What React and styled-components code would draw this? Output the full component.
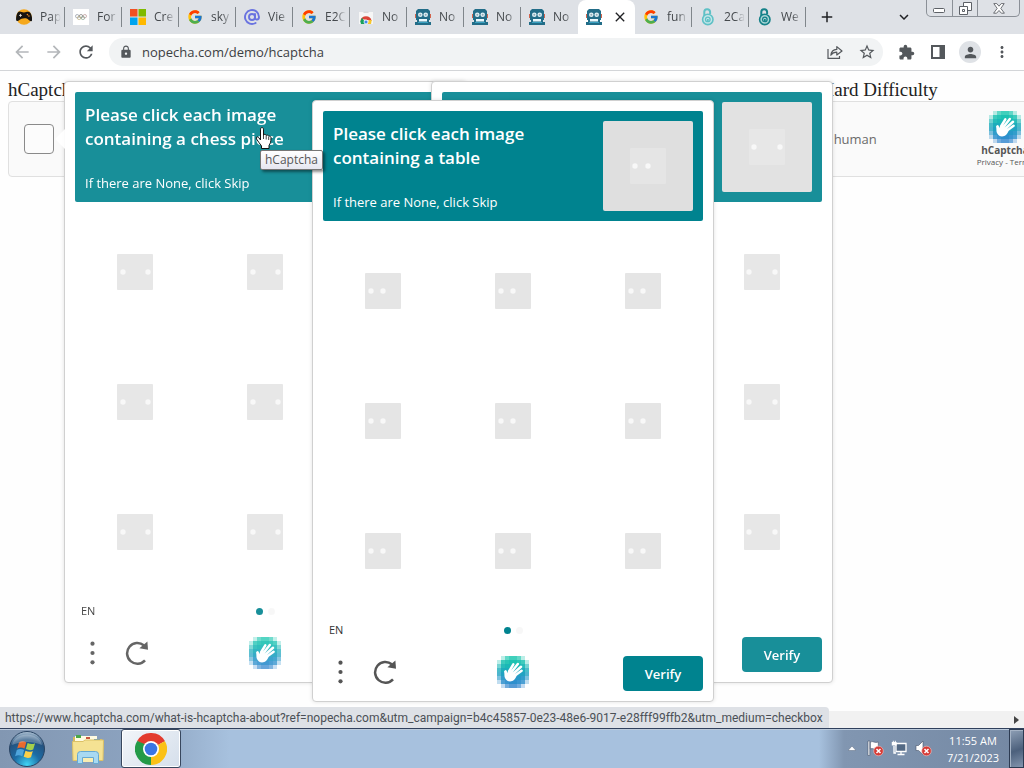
import React from 'react'
import styled, { createGlobalStyle } from 'styled-components'
import { FcGoogle } from 'react-icons/fc'
import {
  MdArrowBack,
  MdArrowForward,
  MdRefresh,
  MdLock,
  MdStarBorder,
  MdExtension,
  MdPerson,
  MdMoreVert,
  MdAdd,
  MdClose,
  MdKeyboardArrowDown,
} from 'react-icons/md'

const GlobalStyle = createGlobalStyle`
  * {
    box-sizing: border-box;
  }
  body {
    margin: 0;
    background: #fff;
    font-family: "Open Sans", "Noto Sans", sans-serif;
  }
  button {
    font: inherit;
    border: 0;
    padding: 0;
    background: none;
    color: inherit;
  }
  svg {
    display: block;
    flex: none;
  }
`

const teal = '#00838f'

/* ---------- layout ---------- */

const Desktop = styled.div`
  display: flex;
  flex-direction: column;
  height: 100vh;
  overflow: hidden;
`

/* ---------- tab strip ---------- */

const TabStrip = styled.header`
  display: flex;
  align-items: center;
  height: 34px;
  padding-left: 8px;
  background: #dee1e6;
`

const Tab = styled.button`
  flex: 0 1 57px;
  display: flex;
  align-items: center;
  gap: ${(p) => (p.$active ? '10px' : '8px')};
  min-width: 0;
  height: ${(p) => (p.$active ? '34px' : '20px')};
  padding: 0 2px 0 8px;
  border-radius: ${(p) => (p.$active ? '8px 8px 0 0' : '0')};
  border-right: ${(p) => (p.$line ? '1px solid #80868b' : '1px solid transparent')};
  background: ${(p) => (p.$active ? '#fff' : 'none')};
  color: #45494d;
`

const TabTitle = styled.span`
  flex: 1;
  overflow: hidden;
  white-space: nowrap;
  text-align: left;
  font-size: 12px;
  line-height: 18px;
  mask-image: linear-gradient(to right, #000 50%, transparent 95%);
`

const StripButton = styled.button`
  display: grid;
  place-items: center;
  width: 28px;
  height: 28px;
  margin-left: 7px;
  color: #202124;
`

const Spacer = styled.div`
  flex: 1;
`

const WindowButtons = styled.div`
  display: flex;
  align-self: flex-start;
  height: 17px;
  margin: 0 4px 0 8px;
  border: 1px solid #8b9097;
  border-top: 0;
  border-radius: 0 0 5px 5px;
`

const WindowButton = styled.button`
  display: grid;
  place-items: center;
  width: ${(p) => (p.$wide ? '42px' : '25px')};
  & + & {
    border-left: 1px solid #8b9097;
  }
`

/* ---------- toolbar ---------- */

const Toolbar = styled.nav`
  display: flex;
  align-items: center;
  height: 37px;
  padding: 0 6px;
  border-bottom: 1px solid #d3d5d8;
  background: #fff;
`

const ToolButton = styled.button`
  display: grid;
  place-items: center;
  width: 32px;
  height: 28px;
  color: ${(p) => (p.$muted ? '#b4b7ba' : '#54585c')};
`

const Omnibox = styled.div`
  flex: 1;
  display: flex;
  align-items: center;
  height: 28px;
  margin: 0 7px;
  padding-left: 10px;
  border-radius: 14px;
  background: #f1f3f4;
  color: #54585c;
`

const Address = styled.input`
  flex: 1;
  min-width: 0;
  margin-left: 9px;
  padding: 0;
  border: 0;
  outline: 0;
  background: none;
  font-family: "Open Sans", sans-serif;
  font-size: 13px;
  line-height: 20px;
  color: #3c4043;
`

const Avatar = styled.span`
  display: grid;
  place-items: center;
  width: 22px;
  height: 22px;
  border-radius: 50%;
  background: #dfe2e6;
`

/* ---------- page ---------- */

const Page = styled.main`
  position: relative;
  flex: 1;
  min-height: 0;
  overflow: hidden;
  padding: 8px;
  background: #fefefe;
`

const Demos = styled.div`
  display: flex;
  gap: 433px;
`

const Demo = styled.section`
  flex: 0 0 303px;
`

const DemoTitle = styled.h3`
  margin: 0;
  font-family: "Liberation Serif", serif;
  font-size: 19px;
  font-weight: 400;
  line-height: 22px;
  white-space: nowrap;
  color: #222;
`

const Widget = styled.div`
  display: flex;
  align-items: center;
  height: 76px;
  padding: 0 7px 0 15px;
  border: 1px solid #e0e0e0;
  border-radius: 4px;
  background: #fafafa;
`

const Check = styled.input`
  appearance: none;
  width: 30px;
  height: 30px;
  margin: 0;
  border: 1px solid #8a8a8a;
  border-radius: 4px;
  background: #fcfcfc;
`

const CheckLabel = styled.label`
  flex: 1;
  margin-left: 14px;
  font-size: 13px;
  color: #6a6a6a;
`

const Brand = styled.div`
  display: flex;
  flex-direction: column;
  align-items: center;
  width: 68px;
  color: #555;
`

const BrandName = styled.strong`
  font-size: 10px;
  font-weight: 700;
  line-height: 14px;
`

const BrandLinks = styled.small`
  font-size: 8px;
  line-height: 10px;
  white-space: nowrap;
  a {
    color: inherit;
    text-decoration: none;
  }
`

/* ---------- challenge popup ---------- */

const Card = styled.section`
  position: absolute;
  top: ${(p) => p.$top}px;
  left: ${(p) => p.$left}px;
  width: 402px;
  padding: 10px;
  border: 1px solid #d0d0d0;
  border-radius: 4px;
  background: #fff;
  box-shadow: 0 0 4px rgba(0, 0, 0, 0.12);
  > * {
    opacity: ${(p) => (p.$faded ? 0.9 : 1)};
  }
`

const Pointer = styled.span`
  position: absolute;
  top: 47px;
  right: 100%;
  border: 10px solid transparent;
  border-left-width: 0;
  border-right-color: #fff;
`

const Prompt = styled.header`
  display: flex;
  justify-content: space-between;
  height: 110px;
  padding: 10px;
  border-radius: 2px;
  background: ${teal};
  color: #fff;
`

const PromptText = styled.div`
  display: flex;
  flex-direction: column;
  justify-content: space-between;
  width: 220px;
`

const PromptTitle = styled.h2`
  margin: 1px 0 0;
  font-size: 17px;
  font-weight: 600;
  line-height: 24px;
`

const PromptHint = styled.p`
  margin: 0;
  font-size: 13px;
  line-height: 18px;
`

const Example = styled.div`
  display: grid;
  place-items: center;
  width: 90px;
  height: 90px;
  border-radius: 2px;
  background: #dfdfdf;
`

const Tiles = styled.div`
  display: grid;
  grid-template-columns: repeat(3, 1fr);
  grid-auto-rows: 120px;
  gap: 10px;
  margin-top: 10px;
`

const Tile = styled.button`
  display: grid;
  place-items: center;
`

const Progress = styled.div`
  display: grid;
  grid-template-columns: 1fr auto 1fr;
  align-items: center;
  height: 20px;
  margin-top: 9px;
  padding: 0 6px;
`

const Language = styled.span`
  font-size: 11px;
  line-height: 20px;
  color: #333;
`

const Dots = styled.span`
  display: flex;
  gap: 5px;
`

const Dot = styled.i`
  width: 7px;
  height: 7px;
  border-radius: 50%;
  background: ${(p) => (p.$on ? teal : '#f7f7f7')};
`

const Actions = styled.footer`
  display: grid;
  grid-template-columns: 1fr auto 1fr;
  align-items: start;
  height: 35px;
  margin-top: 16px;
`

const ActionGroup = styled.div`
  display: flex;
  align-items: center;
  gap: 30px;
  height: 32px;
  padding-left: 15px;
  color: #555;
`

const VerifyButton = styled.button`
  justify-self: end;
  width: 80px;
  height: 35px;
  border-radius: 4px;
  background: ${teal};
  color: #fff;
  font-size: 13px;
  font-weight: 600;
`

/* ---------- things floating over the page ---------- */

const Tooltip = styled.div`
  position: absolute;
  top: 79px;
  left: 260px;
  padding: 0 4px;
  border: 1px solid #767676;
  border-radius: 2px;
  background: linear-gradient(#fff, #e6e6f0);
  box-shadow: 2px 2px 3px rgba(0, 0, 0, 0.45);
  font-size: 12px;
  line-height: 18px;
  color: #575757;
`

const Cursor = styled.svg`
  position: absolute;
  top: 56px;
  left: 255px;
`

const ScrollBar = styled.div`
  position: absolute;
  left: 0;
  right: 0;
  bottom: 0;
  display: flex;
  align-items: center;
  justify-content: flex-end;
  height: 17px;
  padding-right: 5px;
  background: #f1f1f1;
`

const StatusBubble = styled.div`
  position: absolute;
  left: 0;
  bottom: 0;
  height: 21px;
  padding: 0 6px 0 5px;
  border-top-right-radius: 4px;
  background: #dee1e6;
  font-family: Roboto, "Open Sans", sans-serif;
  font-size: 12px;
  line-height: 22px;
  white-space: nowrap;
  color: #4b5056;
`

/* ---------- taskbar ---------- */

const Taskbar = styled.footer`
  display: flex;
  align-items: center;
  height: 40px;
  border-top: 1px solid #30405c;
  background: linear-gradient(
    to right,
    #8297b2 0,
    #8da4c1 150px,
    #a7c1de 230px,
    #a7c1de calc(100% - 205px),
    #8196b1 calc(100% - 180px),
    #7488a3 100%
  );
  box-shadow: inset 0 1px 0 #bccbdc;
`

const TaskButton = styled.button`
  display: grid;
  place-items: center;
  width: ${(p) => p.$width}px;
  height: 39px;
  border: ${(p) => (p.$active ? '1px solid #38475e' : '0')};
  border-radius: 3px;
  background: ${(p) => (p.$active ? 'linear-gradient(135deg, #f2f5f9, #d5dfeb)' : 'none')};
  box-shadow: ${(p) => (p.$active ? 'inset 0 0 0 1px #fff' : 'none')};
`

const Tray = styled.div`
  display: flex;
  align-items: center;
  gap: 7px;
  padding-right: 2px;
`

const TrayArrow = styled.button`
  margin-right: 4px;
`

const Clock = styled.time`
  width: 68px;
  text-align: center;
  font-size: 11px;
  line-height: 17px;
  color: #fff;
`

const ShowDesktop = styled.button`
  width: 15px;
  height: 39px;
  border: 1px solid #2c3b52;
  background: linear-gradient(160deg, #8fa0b6, #4c607c 55%, #8294ad);
  box-shadow: inset 1px 1px 0 #a5b3c5;
`

/* ---------- drawings ---------- */

const logoRows = [
  [0, 0.3, 0.7, 0.85, 0.85, 0.7, 0.3, 0],
  [0.3, 0.85, 0.95, 1, 1, 0.95, 0.85, 0.3],
  [0.6, 0.95, 1, 1, 1, 1, 0.95, 0.6],
  [0.8, 1, 1, 1, 1, 1, 1, 0.8],
  [0.8, 1, 1, 1, 1, 1, 1, 0.8],
  [0.6, 0.95, 1, 1, 1, 1, 0.95, 0.6],
  [0.3, 0.85, 0.95, 1, 1, 0.95, 0.85, 0.3],
  [0, 0.3, 0.7, 0.85, 0.85, 0.7, 0.3, 0],
]
const logoColors = ['#1fc8b0', '#1cc2b2', '#1bb8b6', '#1dadbc', '#21a2c2', '#2798c8', '#2e8fcd', '#3889cf']

const HandLogo = ({ size = 32 }) => (
  <svg width={size} height={size} viewBox="0 0 32 32" shapeRendering="crispEdges">
    {logoRows.map((row, y) =>
      row.map((o, x) => (
        <rect key={`${x}-${y}`} x={x * 4} y={y * 4} width="4" height="4" fill={logoColors[y]} opacity={o} />
      ))
    )}
    <g shapeRendering="auto" stroke="#fff" strokeLinecap="round" strokeWidth="2.5" fill="none">
      <path d="M12 15.5L16.3 8.4M14.5 16L20.8 8M16.5 17.5L24 10.8M18 19.5L24.6 14.8M8.5 15.4L9.6 19" />
    </g>
    <path
      shapeRendering="auto"
      fill="#fff"
      d="M7.4 15.2c1.5-.6 2.8.6 3.2 1.6l1.4-2.2 7.6 4.8c-.8 3.4-3.3 5.9-6.6 6-3.3 0-5.6-2.8-5.6-6.4z"
    />
  </svg>
)

const Robot = () => (
  <svg width="16" height="16" viewBox="0 0 16 16">
    <path fill="#d2644d" d="M0 5h2v4H0zM14 5h2v4h-2z" />
    <path fill="#226d88" d="M3 0h10l2 2v9H1V2zM2 10h12v3H2zM0 13h16v3H0z" />
    <circle cx="5.3" cy="5.8" r="2.3" fill="#dff0f6" />
    <circle cx="10.7" cy="5.8" r="2.3" fill="#dff0f6" />
    <circle cx="5.3" cy="5.8" r="1" fill="#8fa9b4" />
    <circle cx="10.7" cy="5.8" r="1" fill="#8fa9b4" />
    <path fill="#e9f8fd" d="M4 10h8v2.5H4z" />
    <path fill="#39a0c0" d="M3 13h10v1H3z" />
  </svg>
)

const Gamepad = () => (
  <svg width="16" height="16" viewBox="0 0 16 16">
    <circle cx="8" cy="8" r="7.8" fill="#f5a81c" />
    <path
      fill="#161412"
      d="M2 3.2c1.8-1.5 3.7.3 6 .2 2.4-.1 4.2-1.5 6 .1 1.8 1.8 2.5 6.9 1.9 8.2-1.6 1.7-3.6-1.5-5.2-2.1-1.6-.5-3.7-.3-5.2.2-1.6.7-3.6 3.4-5.2 1.8C-.3 10.400.3 5 2 3.200z"
    />
    <path stroke="#f2ece2" strokeWidth=".8" d="M3 6.4h3M4.500 4.900v3" />
    <circle cx="11.4" cy="5.6" r=".8" fill="#f08a24" />
    <circle cx="12.9" cy="7" r=".8" fill="#f08a24" />
  </svg>
)

const Rings = () => (
  <svg width="16" height="16" viewBox="0 0 16 16">
    <path fill="#fff" d="M0 0h16v16H0z" />
    <g fill="none" strokeWidth=".7">
      <circle cx="4.2" cy="7.2" r="1.7" stroke="#8b93a0" />
      <circle cx="8" cy="7.2" r="1.7" stroke="#777" />
      <circle cx="11.8" cy="7.2" r="1.7" stroke="#b58e8e" />
      <circle cx="6.1" cy="8.9" r="1.7" stroke="#bcae80" />
      <circle cx="9.9" cy="8.9" r="1.7" stroke="#86a28e" />
    </g>
  </svg>
)

const Microsoft = () => (
  <svg width="16" height="16" viewBox="0 0 16 16">
    <path fill="#f25022" d="M0 0h7.5v7.5H0z" />
    <path fill="#7fba00" d="M8.5 0H16v7.5H8.5z" />
    <path fill="#00a4ef" d="M0 8.5h7.5V16H0z" />
    <path fill="#ffb900" d="M8.5 8.5H16V16H8.5z" />
  </svg>
)

const AtSign = () => (
  <svg width="16" height="16" viewBox="0 0 16 16" fill="none" stroke="#6a73e0" strokeWidth="1.9">
    <circle cx="8" cy="8" r="3" />
    <path strokeLinecap="round" d="M11 5v3.7c0 2.6 4 2.4 4-.8A7 7 0 1 0 11.6 14" />
  </svg>
)

const WebStore = () => (
  <svg width="16" height="16" viewBox="0 0 16 16">
    <path fill="#f6f6f6" d="M1 3h14v12H1z" />
    <path fill="#d9d9d9" d="M5.5 2.5h5V4h-5z" />
    <path fill="#dc4437" d="M2.4 12a5.7 5.7 0 0 1 11.2 0l-3-.8-5.4-1z" />
    <path fill="#189f5b" d="M2.3 12.4 4 8.7l3 4.3v2H3z" />
    <path fill="#f7c72b" d="M9 15l2-4h2.7l-.7 4z" />
    <circle cx="8" cy="13" r="2" fill="#4588ee" stroke="#fff" strokeWidth=".8" />
  </svg>
)

const Padlock = ({ color, soft }) => (
  <svg width="16" height="18" viewBox="0 0 16 18" fill="none">
    <path stroke={color} strokeWidth="2" d="M4.3 8V4.4a2.9 2.9 0 0 1 5.8-.5v2" />
    <circle cx="7.8" cy="11.4" r="5.2" fill={soft} stroke={color} strokeWidth="1.6" />
    <circle cx="7.8" cy="11.4" r="2.3" stroke={color} strokeWidth="1.3" />
    <path fill={color} d="M7 11h1.7v3H7z" />
  </svg>
)

const ShareIcon = () => (
  <svg width="16" height="16" viewBox="0 0 16 16" fill="none" stroke="currentColor" strokeWidth="1.2">
    <path d="M1 5v9.4h11.5V12" />
    <path strokeLinejoin="round" d="M3.8 11.2c.4-3.5 2.6-5.5 6-5.8V2.6L15 7l-5.2 4V8.2c-2.8 0-4.6 1-6 3z" />
  </svg>
)

const SidePanelIcon = () => (
  <svg width="14" height="14" viewBox="0 0 14 14">
    <path fill="none" stroke="currentColor" strokeWidth="2" d="M1 1h12v12H1z" />
    <path fill="currentColor" d="M8.5 1H13v12H8.5z" />
  </svg>
)

const MinimizeIcon = () => (
  <svg width="13" height="12" viewBox="0 0 13 12">
    <rect x=".5" y="6.5" width="11" height="4" rx="1" fill="#fff" stroke="#5d6167" />
  </svg>
)

const RestoreIcon = () => (
  <svg width="13" height="13" viewBox="0 0 13 13" fill="#fff" stroke="#5d6167">
    <path d="M4.5.5h8v8h-8z" />
    <path d="M.5 4.5h8v8h-8z" />
    <path d="M3.5 7.5h2v2h-2z" />
  </svg>
)

const CloseIcon = () => (
  <svg width="12" height="11" viewBox="0 0 12 11">
    <path
      fill="#fff"
      stroke="#5d6167"
      strokeWidth=".9"
      d="M.8.6h3L6 3.2 8.2.6h3L7.8 5.4l3.6 4.8h-3L6 7.5 3.6 10.2h-3l3.6-4.8z"
    />
  </svg>
)

const Placeholder = ({ eyes }) => (
  <svg width="36" height="36" viewBox="0 0 36 36">
    <rect width="36" height="36" rx="1" fill="#e5e5e5" />
    {eyes.map((x) => (
      <circle key={x} cx={x} cy="18" r="2.7" fill="#f8f8f8" />
    ))}
  </svg>
)

const DotsIcon = () => (
  <svg width="5" height="24" viewBox="0 0 5 24" fill="currentColor">
    <circle cx="2.5" cy="2.7" r="2.1" />
    <circle cx="2.5" cy="12" r="2.1" />
    <circle cx="2.5" cy="21.3" r="2.1" />
  </svg>
)

const ReloadIcon = () => (
  <svg width="24" height="24" viewBox="0 0 24 24">
    <path fill="none" stroke="currentColor" strokeWidth="2.5" d="M20 19.3A10.3 10.3 0 1 1 18.8 4.3" />
    <path fill="currentColor" d="M22.4.4l.6 8.4-8.6-1.6z" />
  </svg>
)

const StartOrb = () => (
  <svg width="38" height="38" viewBox="0 0 38 38">
    <defs>
      <radialGradient id="orb" cx=".5" cy=".95" r=".95">
        <stop offset="0" stopColor="#3fd5f5" />
        <stop offset=".4" stopColor="#1c6ca5" />
        <stop offset=".75" stopColor="#24527f" />
        <stop offset="1" stopColor="#b4c7d8" />
      </radialGradient>
    </defs>
    <circle cx="19" cy="19" r="17.5" fill="url(#orb)" stroke="#294463" />
    <path fill="#ea6a2d" d="M11 12.5c2.5-1.8 4.7-1.5 7.3-.2l-1.8 6.2c-2.5-1.3-4.9-1.5-7.3 0z" />
    <path fill="#a5cf4c" d="M19.6 13c2.5 1.3 5 1.5 7.5.2l-1.9 6.3c-2.5 1.3-4.8.8-7.3-.4z" />
    <path fill="#4fa5dc" d="M8.8 20c2.5-1.5 4.8-1.3 7.3 0l-1.8 6.2c-2.5-1.3-4.8-1.4-7.2.1z" />
    <path fill="#fbd04a" d="M17.5 20.7c2.5 1.3 4.9 1.5 7.3.2L23 27.2c-2.5 1.3-4.8.8-7.3-.4z" />
    <path fill="#fff" opacity=".25" d="M4 15C7 1 31 1 34 15 25 11 13 11 4 15z" />
  </svg>
)

const FolderIcon = () => (
  <svg width="34" height="30" viewBox="0 0 34 30">
    <path fill="#d9b95c" d="M2 3h10l2 2h17v20H2z" />
    <path fill="#fffbe2" d="M4 2h22v6H4z" />
    <path fill="#49a847" d="M5 1h5v3H5z" />
    <path fill="#c8553e" d="M15 3h4v2h-4z" />
    <path fill="#4b8fc9" d="M23 5h6v2h-6z" />
    <path fill="#f5e293" stroke="#dcc166" d="M1.5 7.5H12l2-1.5h18.5L32 26.5H2z" />
    <path fill="#a8d9f2" stroke="#66a9d2" d="M6.5 29.5v-9a3 3 0 0 1 3-3h15a3 3 0 0 1 3 3v9h-5v-6h-11v6z" />
    <path fill="#f9edb2" d="M12 24h10v4H12z" />
  </svg>
)

const ChromeIcon = () => (
  <svg width="32" height="32" viewBox="0 0 32 32">
    <path fill="#e33b2e" d="M16 16L2.14 8A16 16 0 0 1 29.86 8z" />
    <path fill="#fbc116" d="M16 16L29.86 8A16 16 0 0 1 16 32z" />
    <path fill="#239a48" d="M16 16v16A16 16 0 0 1 2.14 8z" />
    <path fill="#e33b2e" d="M16 8h13.86L20 12z" />
    <path fill="#239a48" d="M9.07 20L2.14 8 12 12z" />
    <path fill="#fbc116" d="M22.93 20L16 32v-9z" />
    <circle cx="16" cy="16" r="8" fill="#fff" />
    <circle cx="16" cy="16" r="6.3" fill="#3a75e4" />
  </svg>
)

const Badge = () => (
  <>
    <circle cx="11.5" cy="11" r="4.8" fill="#d63b36" stroke="#f3c8c4" strokeWidth=".6" />
    <path stroke="#fff" strokeWidth="1.5" d="M9.5 9l4 4M13.5 9l-4 4" />
  </>
)

const FlagIcon = () => (
  <svg width="17" height="17" viewBox="0 0 17 17">
    <path fill="#fff" stroke="#45536a" strokeWidth=".6" d="M1 1h1.8v14.5H1zM3.3 2c3-1.5 4 1.5 8 0v7c-4 1.5-5-1.5-8 0z" />
    <Badge />
  </svg>
)

const NetworkIcon = () => (
  <svg width="17" height="17" viewBox="0 0 17 17">
    <path fill="#536984" stroke="#fff" strokeWidth="1.3" d="M5 3.5h10v8H5z" />
    <path stroke="#fff" strokeWidth="1.3" d="M6.5 14.5h7M10 12v2.5M3 6v7h2" fill="none" />
    <path fill="#fff" d="M.8 2h1V.8h1V2h1V.8h1V2h.8v3.5H.8z" />
  </svg>
)

const VolumeIcon = () => (
  <svg width="17" height="17" viewBox="0 0 17 17">
    <path fill="#fff" stroke="#45536a" strokeWidth=".6" d="M1 5.5h2.5L8 1v13.5l-4.500-4H1z" />
    <Badge />
  </svg>
)

/* ---------- data ---------- */

const tabs = [
  { title: 'Pap', icon: <Gamepad />, line: true },
  { title: 'For', icon: <Rings />, line: true },
  { title: 'Cre', icon: <Microsoft />, line: true },
  { title: 'sky', icon: <FcGoogle size={16} />, line: true },
  { title: 'Vie', icon: <AtSign />, line: true },
  { title: 'E2C', icon: <FcGoogle size={16} />, line: true },
  { title: 'No', icon: <WebStore />, line: true },
  { title: 'No', icon: <Robot />, line: true },
  { title: 'No', icon: <Robot />, line: true },
  { title: 'No', icon: <Robot /> },
  { icon: <Robot />, active: true },
  { title: 'fun', icon: <FcGoogle size={16} />, line: true },
  { title: '2Ca', icon: <Padlock color="#5fc1c6" soft="#c5e6e9" />, line: true },
  { title: 'We', icon: <Padlock color="#168289" soft="#a9d5d6" />, line: true },
]

/* ---------- pieces ---------- */

const Captcha = ({ id, title, label, brand }) => (
  <Demo>
    <DemoTitle>{title}</DemoTitle>
    <Widget>
      <Check type="checkbox" id={id} aria-label="hCaptcha" />
      {label && <CheckLabel htmlFor={id}>{label}</CheckLabel>}
      {brand && (
        <Brand>
          <HandLogo />
          <BrandName>hCaptcha</BrandName>
          <BrandLinks>
            <a href="#privacy">Privacy</a> - <a href="#terms">Terms</a>
          </BrandLinks>
        </Brand>
      )}
    </Widget>
  </Demo>
)

const Challenge = ({ top, left, faded, pointer, title, hint, eyes, sample, language, verify }) => (
  <Card $top={top} $left={left} $faded={faded}>
    {pointer && <Pointer />}
    <Prompt>
      <PromptText>
        {title && <PromptTitle>{title}</PromptTitle>}
        {hint && <PromptHint>{hint}</PromptHint>}
      </PromptText>
      <Example>
        <Placeholder eyes={sample} />
      </Example>
    </Prompt>
    <Tiles>
      {Array.from({ length: 9 }, (_, i) => (
        <Tile key={i} aria-label={`Image ${i + 1}`}>
          <Placeholder eyes={eyes} />
        </Tile>
      ))}
    </Tiles>
    <Progress>
      <Language>{language}</Language>
      <Dots>
        <Dot $on />
        <Dot />
      </Dots>
    </Progress>
    <Actions>
      <ActionGroup>
        <button aria-label="More options">
          <DotsIcon />
        </button>
        <button aria-label="New challenge">
          <ReloadIcon />
        </button>
      </ActionGroup>
      <HandLogo />
      {verify && <VerifyButton>Verify</VerifyButton>}
    </Actions>
  </Card>
)

const App = () => {
  return (
    <>
      <GlobalStyle />
      <Desktop>
        <TabStrip>
          {tabs.map((tab, i) => (
            <Tab key={i} $active={tab.active} $line={tab.line}>
              {tab.icon}
              {tab.active ? <MdClose size={16} color="#202124" /> : <TabTitle>{tab.title}</TabTitle>}
            </Tab>
          ))}
          <StripButton aria-label="New tab">
            <MdAdd size={18} />
          </StripButton>
          <Spacer />
          <StripButton aria-label="Search tabs">
            <MdKeyboardArrowDown size={18} />
          </StripButton>
          <WindowButtons>
            <WindowButton aria-label="Minimize">
              <MinimizeIcon />
            </WindowButton>
            <WindowButton aria-label="Restore">
              <RestoreIcon />
            </WindowButton>
            <WindowButton $wide aria-label="Close">
              <CloseIcon />
            </WindowButton>
          </WindowButtons>
        </TabStrip>

        <Toolbar>
          <ToolButton $muted aria-label="Back">
            <MdArrowBack size={20} />
          </ToolButton>
          <ToolButton $muted aria-label="Forward">
            <MdArrowForward size={20} />
          </ToolButton>
          <ToolButton aria-label="Reload">
            <MdRefresh size={20} />
          </ToolButton>
          <Omnibox>
            <MdLock size={14} />
            <Address aria-label="Address" defaultValue="nopecha.com/demo/hcaptcha" />
            <ToolButton aria-label="Share">
              <ShareIcon />
            </ToolButton>
            <ToolButton aria-label="Bookmark">
              <MdStarBorder size={18} />
            </ToolButton>
          </Omnibox>
          <ToolButton aria-label="Extensions">
            <MdExtension size={17} />
          </ToolButton>
          <ToolButton aria-label="Side panel">
            <SidePanelIcon />
          </ToolButton>
          <ToolButton aria-label="Profile">
            <Avatar>
              <MdPerson size={17} />
            </Avatar>
          </ToolButton>
          <ToolButton aria-label="Menu">
            <MdMoreVert size={18} />
          </ToolButton>
        </Toolbar>

        <Page>
          <Demos>
            <Captcha id="easy" title="hCaptcha" />
            <Captcha id="hard" title="hCaptcha Hard Difficulty" label="I am human" brand />
          </Demos>

          <Challenge
            top={10}
            left={64}
            faded
            pointer
            title="Please click each image containing a chess piece"
            hint="If there are None, click Skip"
            eyes={[6, 31]}
            sample={[5, 31]}
            language="EN"
          />
          <Challenge top={10} left={431} faded eyes={[5, 31]} sample={[5, 31]} verify />
          <Challenge
            top={29}
            left={312}
            title="Please click each image containing a table"
            hint="If there are None, click Skip"
            eyes={[6, 18]}
            sample={[5, 18]}
            language="EN"
            verify
          />

          <Cursor width="17" height="23" viewBox="0 0 17 23">
            <path
              fill="#fff"
              stroke="#111"
              strokeLinejoin="round"
              d="M5.5 13V2.2c0-2.2 3-2.2 3 0V8c.6-1 2.5-.8 2.7.5.8-.8 2.3-.4 2.5.8 1-.5 2.3 0 2.3 1.5 0 4-.6 5.5-2 7.7v3H6.5V19c-2-2.500-3.500-5-5-7-1-1.500.8-2.800 2-1.600z"
            />
            <path stroke="#111" strokeWidth=".8" d="M8.5 8v4M11.2 9v3.5M13.7 10v3" />
          </Cursor>
          <Tooltip>hCaptcha</Tooltip>

          <ScrollBar>
            <svg width="5" height="8" viewBox="0 0 5 8">
              <path fill="#444" d="M0 0l5 4-5 4z" />
            </svg>
          </ScrollBar>
          <StatusBubble>
            https://www.hcaptcha.com/what-is-hcaptcha-about?ref=nopecha.com&amp;utm_campaign=b4c45857-0e23-48e6-9017-e28fff99ffb2&amp;utm_medium=checkbox
          </StatusBubble>
        </Page>

        <Taskbar>
          <TaskButton $width={54} aria-label="Start">
            <StartOrb />
          </TaskButton>
          <TaskButton $width={67} aria-label="Explorer">
            <FolderIcon />
          </TaskButton>
          <TaskButton $width={60} $active aria-label="Chrome">
            <ChromeIcon />
          </TaskButton>
          <Spacer />
          <Tray>
            <TrayArrow aria-label="Show hidden icons">
              <svg width="8" height="5" viewBox="0 0 8 5">
                <path fill="#fff" stroke="#56677f" strokeWidth=".5" d="M0 4.5L4 0l4 4.5z" />
              </svg>
            </TrayArrow>
            <FlagIcon />
            <NetworkIcon />
            <VolumeIcon />
            <Clock>
              11:55 AM
              <br />
              7/21/2023
            </Clock>
          </Tray>
          <ShowDesktop aria-label="Show desktop" />
        </Taskbar>
      </Desktop>
    </>
  )
}

export default App
